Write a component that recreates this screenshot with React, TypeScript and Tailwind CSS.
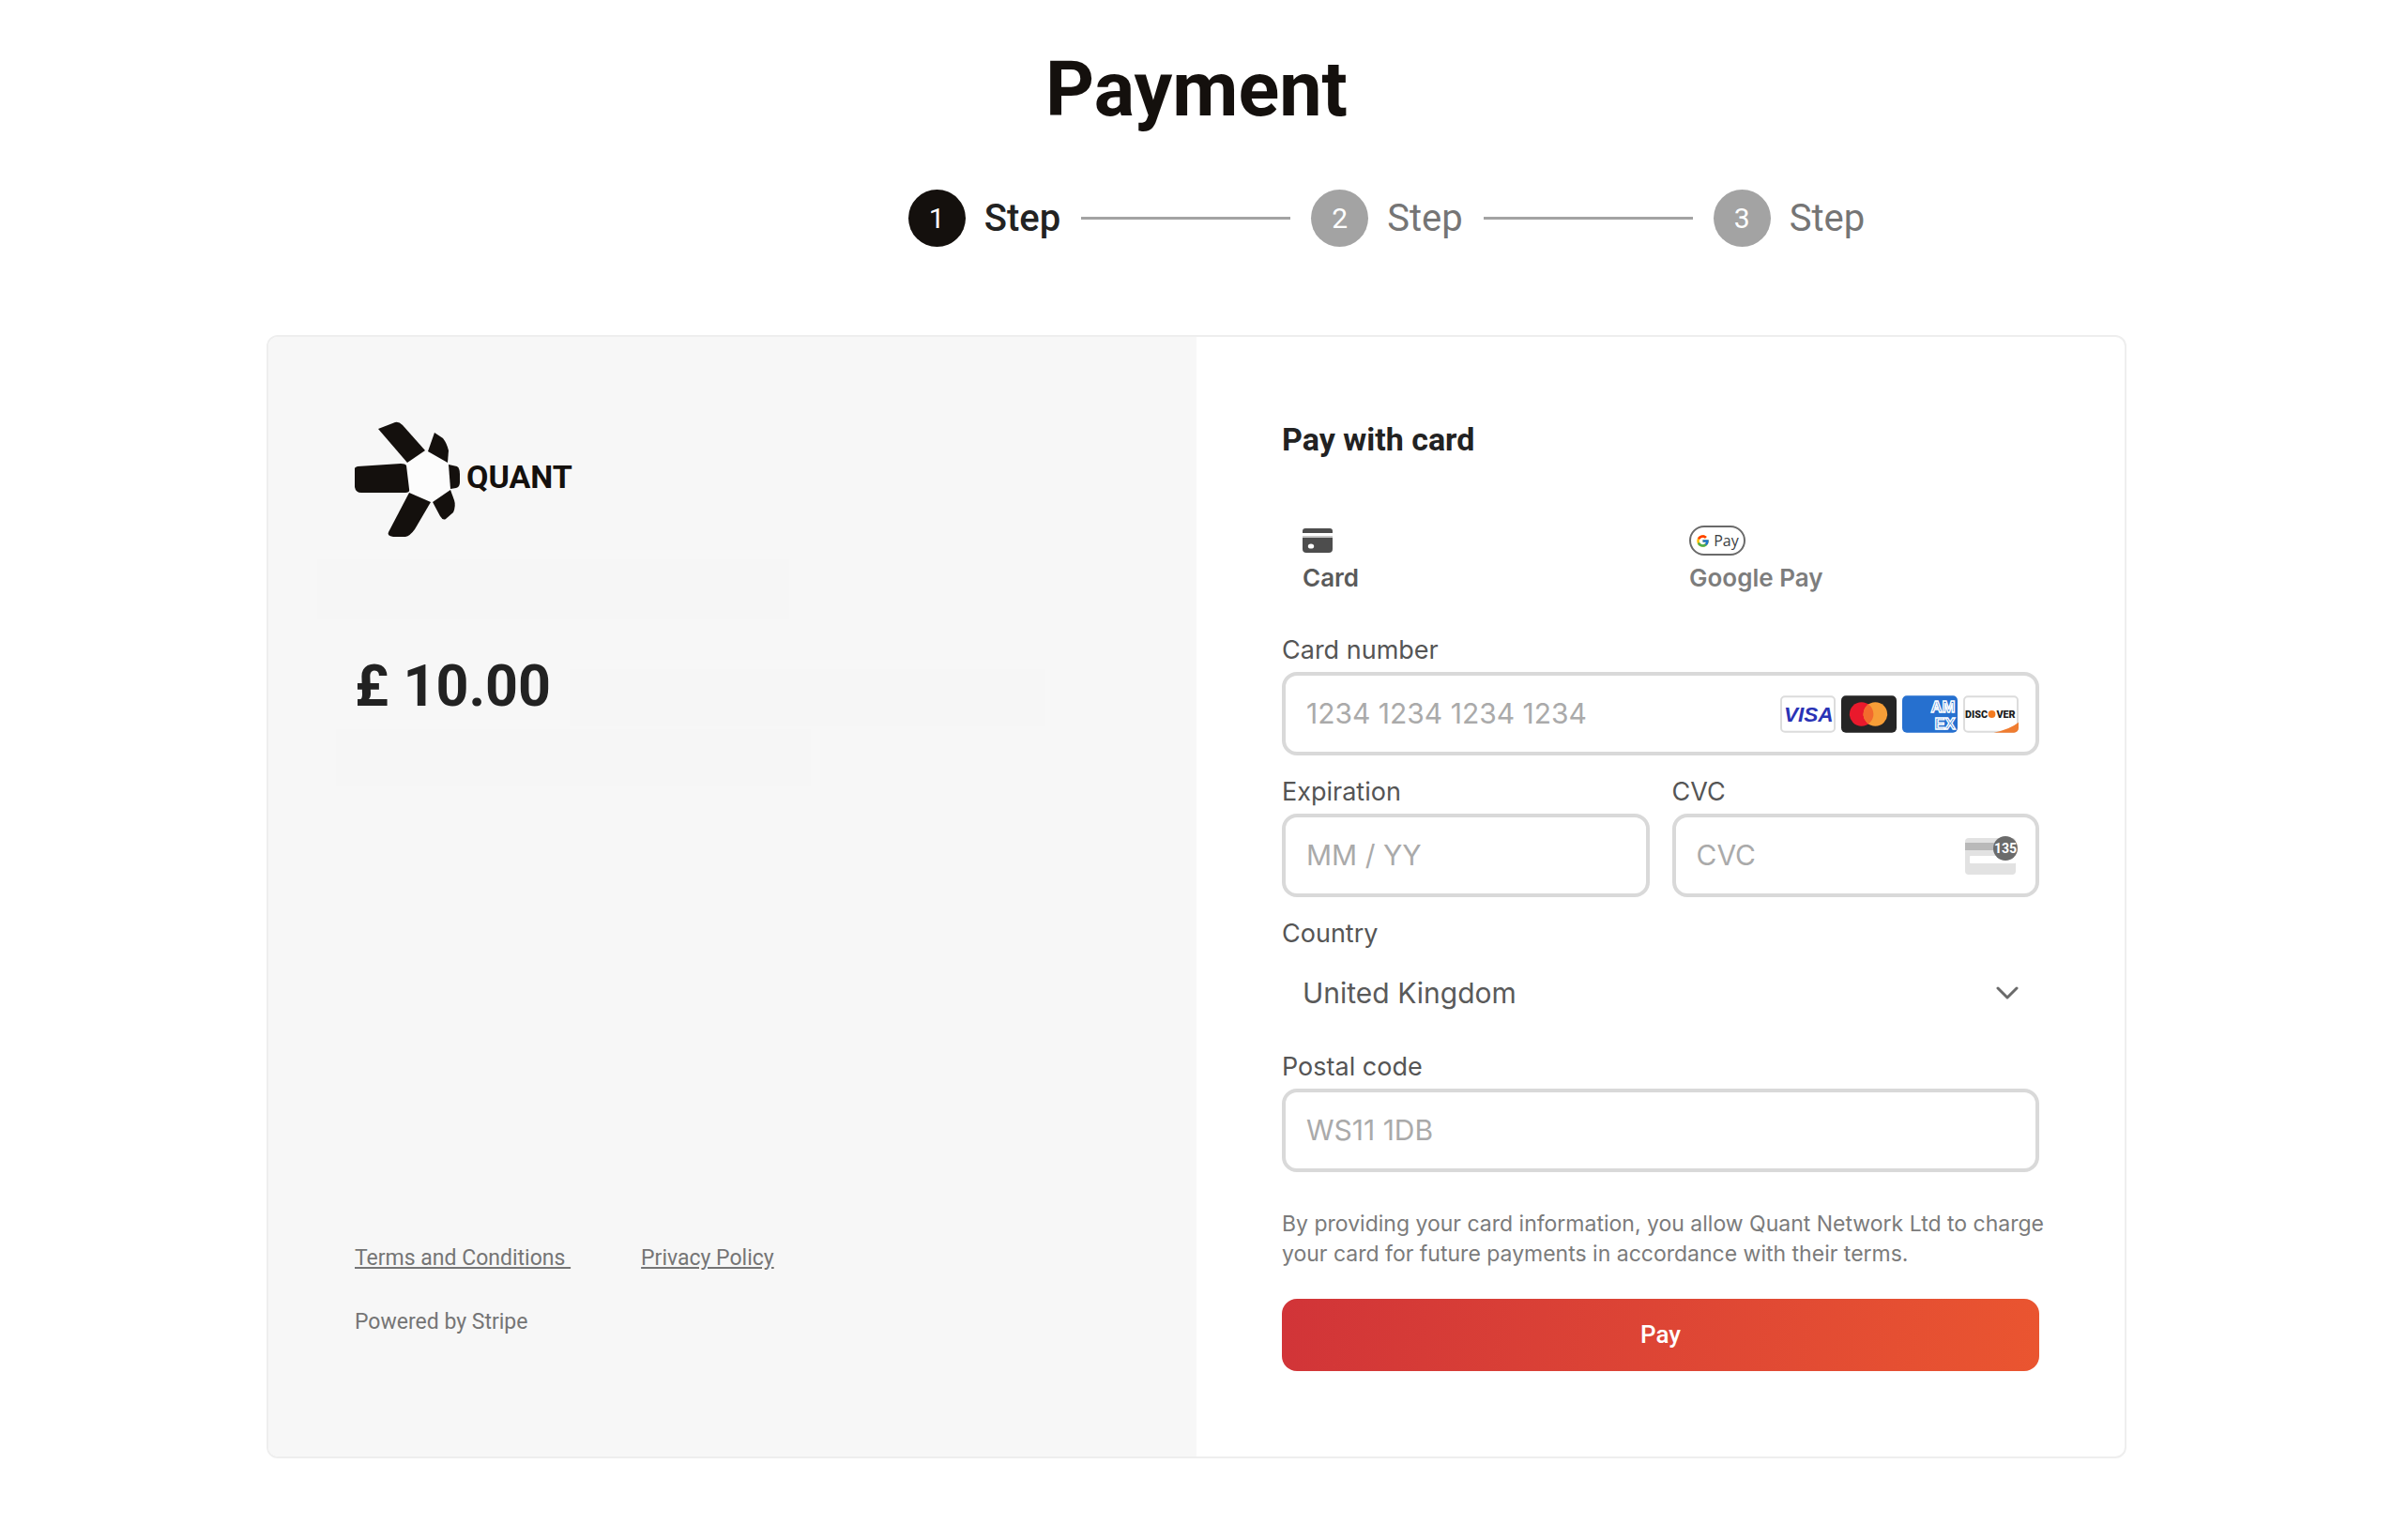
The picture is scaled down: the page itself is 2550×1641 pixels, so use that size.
import { Fragment, useState } from "react";
import type { ReactNode } from "react";
import clsx from "clsx";
import { FcGoogle } from "react-icons/fc";

const STEPS = [1, 2, 3];

const COUNTRIES = ["United Kingdom", "Ireland", "France", "Germany"];

function QuantLogo() {
  return (
    <svg
      viewBox="0 0 240 126"
      className="w-60 h-[126px] shrink-0"
      role="img"
      aria-label="Quant"
    >
      <polygon points="56,44 77,32 100,45 102,73 83,87 59,77" fill="#fcfcfc" />
      <g fill="#14100d">
        <path d="M25 8 L43 1 Q47 0 51 4 L75 31 L56 44 Z" />
        <path d="M85 12 L94 18 Q98 23 100 31 L99 44 L78 32 Z" />
        <path d="M100 46 L109 48 Q112 50 112 56 L112 65 Q112 70 108 71 L102 72 Z" />
        <path d="M102 73 L106 84 Q108 90 105 97 L97 104 Q94 106 91 101 L83 86 Z" />
        <path d="M58 76 L81 86 L64 115 Q59 122 54 123 L41 123 Q34 122 36 118 Z" />
        <path d="M3 48 L49 45 Q54 45 55 47 L58 72 Q59 76 54 76 L7 76 Q1 76 0 70 L-1 53 Q-1 49 3 48 Z" />
      </g>
      <text
        x="119"
        y="71"
        fontSize="34"
        className="font-['Roboto',sans-serif] font-bold"
        fill="#14100d"
      >
        QUANT
      </text>
    </svg>
  );
}

function CardIcon() {
  return (
    <svg viewBox="0 0 32 26" className="w-8 h-[26px]" aria-hidden="true">
      <path d="M3 0h26a3 3 0 0 1 3 3v2H0V3a3 3 0 0 1 3-3Z" fill="#4d4d4d" />
      <path d="M0 9h32v13a4 4 0 0 1-4 4H4a4 4 0 0 1-4-4Z" fill="#4d4d4d" />
      <rect y="8" width="32" height="2" fill="#c9c9c9" />
      <ellipse cx="9" cy="19" rx="3.200" ry="2.600" fill="#fff" />
    </svg>
  );
}

function VisaIcon() {
  return (
    <svg viewBox="0 0 60 40" className="w-[59px] h-10" aria-label="Visa">
      <rect
        x="1"
        y="1"
        width="58"
        height="38"
        rx="4"
        fill="#fff"
        stroke="#dcdcdc"
        strokeWidth="2"
      />
      <text
        x="4"
        y="28"
        fontSize="23"
        className="font-['Liberation_Sans',sans-serif] font-bold italic"
        fill="#2a33b5"
      >
        VISA
      </text>
    </svg>
  );
}

function MastercardIcon() {
  return (
    <svg viewBox="0 0 60 40" className="w-[59px] h-10" aria-label="Mastercard">
      <rect width="60" height="40" rx="5" fill="#252525" />
      <circle cx="22" cy="20" r="13" fill="#e9192c" />
      <circle cx="37" cy="20" r="13" fill="#f79e37" />
      <path
        d="M29.500 9.400 a13 13 0 0 1 0 21.200 a13 13 0 0 1 0-21.200Z"
        fill="#f26b2d"
      />
    </svg>
  );
}

function AmexIcon() {
  return (
    <svg viewBox="0 0 60 40" className="w-[59px] h-10" aria-label="Amex">
      <rect width="60" height="40" rx="5" fill="#2670cf" />
      <g
        fill="#2670cf"
        stroke="#fff"
        strokeWidth="1.400"
        fontSize="17"
        className="font-['Liberation_Sans',sans-serif] font-bold"
      >
        <text x="31" y="18">
          AM
        </text>
        <text x="35" y="36">
          EX
        </text>
      </g>
    </svg>
  );
}

function DiscoverIcon() {
  return (
    <svg viewBox="0 0 60 40" className="w-[59px] h-10" aria-label="Discover">
      <rect
        x="1"
        y="1"
        width="58"
        height="38"
        rx="4"
        fill="#fff"
        stroke="#dcdcdc"
        strokeWidth="2"
      />
      <path d="M33 40 Q50 37 60 29 V35 a5 5 0 0 1-5 5Z" fill="#ef7c30" />
      <g
        fill="#1b1b1b"
        fontSize="11"
        className="font-['Roboto',sans-serif] font-black"
      >
        <text x="2" y="24">
          DISC
        </text>
        <text x="36" y="24">
          VER
        </text>
      </g>
      <circle cx="31" cy="20" r="4" fill="#f47b20" />
    </svg>
  );
}

function CvcIcon() {
  return (
    <svg viewBox="0 0 58 42" className="w-[58px] h-[42px]" aria-hidden="true">
      <rect x="1" y="2" width="54" height="39" rx="4" fill="#e2e2e2" />
      <rect x="1" y="7" width="54" height="8" fill="#b9b9b9" />
      <rect x="6" y="21" width="49" height="8" rx="1" fill="#fff" />
      <circle cx="44" cy="13" r="13" fill="#6b6b6b" />
      <text
        x="44"
        y="18"
        fontSize="14"
        textAnchor="middle"
        className="font-['Roboto',sans-serif] font-bold"
        fill="#fff"
      >
        135
      </text>
    </svg>
  );
}

interface FieldProps {
  id: string;
  label: string;
  placeholder: string;
  children?: ReactNode;
}

function Field({ id, label, placeholder, children }: FieldProps) {
  const [value, setValue] = useState("");

  return (
    <div className="flex flex-col gap-1.5 min-w-0">
      <label htmlFor={id} className="text-[27px] leading-[34px] text-[#555555]">
        {label}
      </label>
      <div className="flex items-center h-[89px] border-4 border-[#d9d9d9] rounded-2xl bg-white px-[22px] pr-[18px]">
        <input
          id={id}
          value={value}
          onChange={(e) => setValue(e.target.value)}
          placeholder={placeholder}
          className="flex-1 min-w-0 text-[30px] text-[#444444] placeholder:text-[#aaaaaa] outline-none"
        />
        {children}
      </div>
    </div>
  );
}

function Stepper() {
  return (
    <ol className="flex items-center mt-[58px] pl-[405px]">
      {STEPS.map((n) => (
        <Fragment key={n}>
          {n > 1 && (
            <li aria-hidden="true" className="w-[223px] h-[3px] mx-[22px] bg-[#a3a3a3]" />
          )}
          <li className="flex items-center gap-5">
            <span
              className={clsx(
                "flex items-center justify-center size-[61px] rounded-full text-white text-[30px]",
                n === 1 ? "bg-[#14100d]" : "bg-[#a3a3a3]",
              )}
            >
              {n}
            </span>
            <span
              className={clsx(
                "text-[40px] leading-12",
                n === 1 ? "font-medium text-[#222222]" : "text-[#757575]",
              )}
            >
              Step
            </span>
          </li>
        </Fragment>
      ))}
    </ol>
  );
}

function Summary() {
  return (
    <section className="flex flex-col bg-[#f7f7f7] px-23 pt-[90px] pb-[127px] text-[#757575] text-[23px] leading-8">
      <QuantLogo />
      <div className="w-[503px] h-16 mt-[21px] -ml-10 bg-[#f6f6f6]" />
      <div className="flex items-start gap-5 mt-[39px]">
        <p className="text-[61px] leading-16 font-bold text-[#222222]">£ 10.00</p>
        <div className="w-[507px] h-[61px] mt-3.5 bg-[#f6f6f6]" />
      </div>
      <div className="w-[506px] h-[61px] mt-[3px] -ml-5 bg-[#f6f6f6]" />
      <nav className="flex gap-[75px] mt-auto">
        <a href="#terms" className="underline whitespace-pre">
          {"Terms and Conditions "}
        </a>
        <a href="#privacy" className="underline">
          Privacy Policy
        </a>
      </nav>
      <p className="mt-9">Powered by Stripe</p>
    </section>
  );
}

function PaymentForm() {
  const [method, setMethod] = useState("card");
  const [country, setCountry] = useState(COUNTRIES[0]);

  return (
    <form
      onSubmit={(e) => e.preventDefault()}
      className="flex flex-col px-[91px] pt-[89px] pb-[91px] font-['Inter',sans-serif]"
    >
      <h2 className="font-['Roboto',sans-serif] text-[34px] leading-10 font-bold text-[#222222]">
        Pay with card
      </h2>

      <div className="grid grid-cols-[412px_1fr] mt-18 mb-11 pl-[22px] text-[26px] leading-8 font-semibold">
        <button
          type="button"
          aria-pressed={method === "card"}
          onClick={() => setMethod("card")}
          className="flex flex-col items-start gap-2 text-[#5a5a5a]"
        >
          <span className="flex items-center h-8">
            <CardIcon />
          </span>
          Card
        </button>
        <button
          type="button"
          aria-pressed={method === "google"}
          onClick={() => setMethod("google")}
          className="flex flex-col items-start gap-2 text-[#7d7d7d]"
        >
          <span className="flex items-center justify-center gap-1 w-[60px] h-8 border-2 border-[#6a6a6a] rounded-full font-['Open_Sans',sans-serif] text-base leading-4 font-normal text-[#3c4043]">
            <FcGoogle size={15} />
            Pay
          </span>
          Google Pay
        </button>
      </div>

      <div className="flex flex-col gap-[22px]">
        <Field id="card-number" label="Card number" placeholder="1234 1234 1234 1234">
          <div className="flex gap-1.5">
            <VisaIcon />
            <MastercardIcon />
            <AmexIcon />
            <DiscoverIcon />
          </div>
        </Field>
        <div className="grid grid-cols-2 gap-6">
          <Field id="expiration" label="Expiration" placeholder="MM / YY" />
          <Field id="cvc" label="CVC" placeholder="CVC">
            <CvcIcon />
          </Field>
        </div>
        <div className="flex flex-col gap-1.5">
          <label htmlFor="country" className="text-[27px] leading-[34px] text-[#555555]">
            Country
          </label>
          <div className="grid items-center">
            <select
              id="country"
              value={country}
              onChange={(e) => setCountry(e.target.value)}
              className="col-start-1 row-start-1 w-full h-20 px-[22px] appearance-none bg-transparent text-[30px] text-[#5a5a5a] outline-none"
            >
              {COUNTRIES.map((c) => (
                <option key={c}>{c}</option>
              ))}
            </select>
            <svg
              viewBox="0 0 24 14"
              className="col-start-1 row-start-1 justify-self-end w-6 h-3.5 mr-[22px] pointer-events-none"
              fill="none"
              stroke="#6a6a6a"
              strokeWidth="3"
              strokeLinecap="round"
              strokeLinejoin="round"
            >
              <path d="M2 2 L12 12 L22 2" />
            </svg>
          </div>
        </div>
        <Field id="postal-code" label="Postal code" placeholder="WS11 1DB" />
      </div>

      <p className="mt-[39px] -mr-2 text-[23px] leading-8 text-[#7b7b7b]">
        By providing your card information, you allow Quant Network Ltd to charge
        your card for future payments in accordance with their terms.
      </p>
      <button
        type="submit"
        className="h-[77px] mt-8 rounded-2xl bg-linear-100 from-[#d13438] to-[#ea5530] font-['Roboto',sans-serif] text-[26px] font-medium text-white"
      >
        Pay
      </button>
    </form>
  );
}

export default function App() {
  return (
    <main className="flex flex-col items-center min-h-screen bg-white pt-12 pb-20 font-['Roboto',sans-serif]">
      <h1 className="text-[81px] leading-24 font-bold text-[#14100d]">Payment</h1>
      <Stepper />
      <div className="grid grid-cols-2 w-full max-w-[1982px] mt-[94px] border-2 border-[#eeeeee] rounded-xl overflow-hidden">
        <Summary />
        <PaymentForm />
      </div>
    </main>
  );
}
